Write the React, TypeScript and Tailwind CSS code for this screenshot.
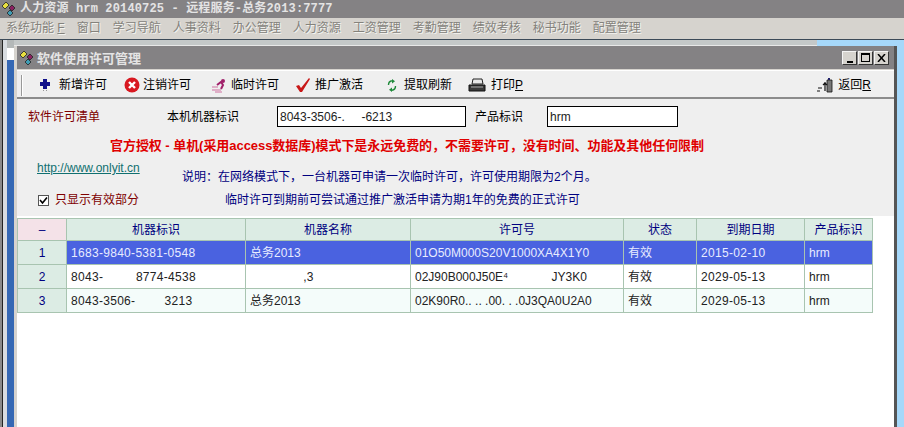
const cjk = "font-['Liberation_Sans','Noto_Sans_CJK_SC',sans-serif]";

const menus = ["窗口", "学习导航", "人事资料", "办公管理", "人力资源", "工资管理", "考勤管理", "绩效考核", "秘书功能", "配置管理"];

function Logo() {
  return (
    <svg width="18" height="16" viewBox="0 0 18 16" className="shrink-0">
      <path d="M1 5 L5 1 L8 4 L4 8 Z" fill="#e8e040" stroke="#222" strokeWidth="0.8" />
      <path d="M8 7 L11 4 L14 7 L11 10 Z" fill="#8a2060" stroke="#222" strokeWidth="0.8" />
      <path d="M6 12 L9 9 L12 12 L9 15 Z" fill="#3f9db5" stroke="#222" strokeWidth="0.8" />
    </svg>
  );
}

function PlusIcon() {
  return (
    <svg width="12" height="15" viewBox="0 0 12 15">
      <path d="M4 1h4v3h3v4H8v3H4V8H1V4h3z" fill="#10108a" />
      <path d="M4 12h1v1H4zM7 12h1v1H7z" fill="#999" />
    </svg>
  );
}

function CrossIcon() {
  return (
    <svg width="16" height="16" viewBox="0 0 16 16">
      <circle cx="8" cy="8" r="7.5" fill="#d81820" />
      <path d="M5 5l6 6M11 5l-6 6" stroke="#fff" strokeWidth="2.4" />
    </svg>
  );
}

function TempIcon() {
  return (
    <svg width="16" height="15" viewBox="0 0 16 15">
      <circle cx="12" cy="3" r="2" fill="#a0206a" />
      <path d="M6 7l4-3 2 3-2 4" stroke="#a0206a" strokeWidth="2" fill="none" />
      <path d="M1 9h6M1 12h9M4 14h7" stroke="#d070a0" strokeWidth="1.2" />
    </svg>
  );
}

function CheckIcon() {
  return (
    <svg width="16" height="15" viewBox="0 0 16 15">
      <path d="M1 8l3-1 2 3 8-10 1 1-8 13h-2z" fill="#c81818" />
    </svg>
  );
}

function RefreshIcon() {
  return (
    <svg width="10" height="13" viewBox="0 0 10 13">
      <path d="M5 0v2.5A3.5 3.5 0 0 0 2.2 6H.8A5 5 0 0 1 5 1z" fill="#1f8a3a" />
      <path d="M5 0l3 2.2L5 4.4z" fill="#1f8a3a" />
      <path d="M5 13v-2.5A3.5 3.5 0 0 0 7.8 7h1.4A5 5 0 0 1 5 12z" fill="#1f8a3a" />
      <path d="M5 13L2 10.8 5 8.6z" fill="#1f8a3a" />
    </svg>
  );
}

function PrintIcon() {
  return (
    <svg width="18" height="15" viewBox="0 0 18 15">
      <path d="M5 1h9l1 5H4z" fill="#e8e8e8" stroke="#222" />
      <path d="M1 7h16v6H1z" fill="#3a3a3a" stroke="#111" />
      <path d="M3 9h12" stroke="#aaa" />
    </svg>
  );
}

function ExitIcon() {
  return (
    <svg width="16" height="16" viewBox="0 0 16 16">
      <path d="M10 3h5v12h-5z" fill="#777" stroke="#111" strokeWidth="0.8" />
      <path d="M11 1h2v2h-2z" fill="#22226a" />
      <path d="M8 5v9M6 8l2-2 2 2M1 11h4M0 14h3" stroke="#111" strokeWidth="1.2" fill="none" />
    </svg>
  );
}

const tools = [
  { icon: <PlusIcon />, label: "新增许可", box: "ml-[16px] w-[85px]", gap: "gap-2" },
  { icon: <CrossIcon />, label: "注销许可", box: "w-[87px]", gap: "gap-[3px]" },
  { icon: <TempIcon />, label: "临时许可", box: "w-[84px]", gap: "gap-1" },
  { icon: <CheckIcon />, label: "推广激活", box: "w-[92px]", gap: "gap-1" },
  { icon: <RefreshIcon />, label: "提取刷新", box: "w-[81px]", gap: "gap-[7px]" },
];

const rows = [
  { no: "1", id: "1683-9840-5381-0548", name: "总务2013", lic: "01O50M000S20V1000XA4X1Y0", date: "2015-02-10" },
  { no: "2", id: "8043-         8774-4538", name: "                ,3", lic: "02J90B000J50E⁴             JY3K0", date: "2029-05-13" },
  { no: "3", id: "8043-3506-        3213", name: "总务2013", lic: "02K90R0.. .. .00. . .0J3QA0U2A0", date: "2029-05-13" },
];

const grid = "grid grid-cols-[49px_179px_165px_213px_73px_108px_67px]";
const heads = ["机器标识", "机器名称", "许可号", "状态", "到期日期", "产品标识"];
const winBtn = "w-[15px] h-[14px] bg-[#d6d3ce] border border-[#f4f4f4] border-r-[#333] border-b-[#333] flex justify-center";

export default function App() {
  return (
    <div className={`${cjk} w-[904px] h-[427px] overflow-hidden flex flex-col bg-white text-[12px] leading-none text-black`}>
      <div className="h-[18px] shrink-0 bg-[#848284] flex items-center pl-[1px] gap-[1px] font-['Liberation_Mono','Noto_Sans_CJK_SC',monospace] text-[12px] tracking-[0.15px] font-bold text-[#e4e4e4] whitespace-pre">
        <Logo />
        <span>人力资源 hrm 20140725 - 远程服务-总务2013:7777</span>
      </div>
      <div className="h-[21px] shrink-0 bg-[#d6d3ce] flex items-center pl-[6px] pb-[1px] gap-3 text-[#84827c] [text-shadow:1px_1px_0_#f4f4f0]">
        <span className="whitespace-pre">系统功能 <span className="underline">F</span></span>
        {menus.map((m) => (
          <span key={m}>{m}</span>
        ))}
      </div>
      <div className="h-[1px] shrink-0 bg-[#3c4a58]" />
      <div className="flex-1 flex min-h-0">
        <div className="w-[7px] shrink-0 flex">
          <div className="w-[2px] bg-[#8a8a8a]" />
          <div className="w-[1px] bg-[#222]" />
          <div className="w-[4px] bg-[#d8dce0]" />
        </div>
        <div className="w-[7px] shrink-0 flex flex-col">
          <div className="h-[8px] bg-[#b4b8b8]" />
          <div className="h-[12px] bg-white" />
          <div className="flex-1 bg-[#3568b4]" />
        </div>
        <div className="w-[883px] shrink-0 flex flex-col">
          <div className="h-[6px] shrink-0 flex">
            <div className="w-[803px] bg-[#c4c8c8] border-b border-[#e8e8e8]" />
            <div className="flex-1 bg-[#a6d8fa]" />
          </div>
          <div className="flex-1 min-h-0 flex flex-col bg-[#d6d3ce] pl-[3px] border-r-[3px] border-[#555]">
            <div className="h-[23px] shrink-0 bg-[#848284] flex items-center gap-[1px] pl-[2px] pr-[5px] text-[13px] font-bold text-[#e4e4e4]">
              <Logo />
              <span className="pt-[1px] -ml-[1px]">软件使用许可管理</span>
              <div className="ml-auto flex gap-[1px]">
                <button className={`${winBtn} items-end pb-[1px]`}>
                  <span className="w-[6px] h-[2px] bg-black" />
                </button>
                <button className={`${winBtn} items-center`}>
                  <span className="w-[9px] h-[9px] border border-black border-t-2" />
                </button>
                <button className={`${winBtn} items-center`}>
                  <svg width="9" height="8" viewBox="0 0 9 8">
                    <path d="M1 0l7 8M8 0L1 8" stroke="#000" strokeWidth="1.5" />
                  </svg>
                </button>
              </div>
            </div>
            <div className="h-[29px] shrink-0 mt-[1px] pt-[2px] bg-[#efefef] border-t border-b-2 border-t-[#fff] border-b-[#8c8c8c] flex items-center pl-[4px] pr-[23px]">
              <div className="w-[2px] h-[21px] bg-[#999] border-r border-white" />
              {tools.map((t) => (
                <div key={t.label} className={`flex items-center ${t.box} ${t.gap}`}>
                  {t.icon}
                  <span>{t.label}</span>
                </div>
              ))}
              <div className="flex items-center gap-[5px]">
                <PrintIcon />
                <span>打印<span className="underline">P</span></span>
              </div>
              <div className="ml-auto flex items-center gap-[5px]">
                <ExitIcon />
                <span>返回<span className="underline">R</span></span>
              </div>
            </div>
            <div className="flex-1 min-h-0 bg-white flex flex-col">
              <div className="h-[117px] shrink-0 bg-[#efefef] flex flex-col">
                <div className="flex items-center pt-[7px] pl-[11px]">
                  <span className="w-[139px] text-[#800000]">软件许可清单</span>
                  <span className="w-[110px]">本机机器标识</span>
                  <div className="w-[189px] h-[21px] bg-white border border-black flex items-center pl-[2px] text-[#222] whitespace-pre">8043-3506-.     -6213</div>
                  <span className="w-[72px] pl-[9px] box-content">产品标识</span>
                  <div className="w-[131px] h-[21px] bg-white border border-black flex items-center pl-[2px] text-[#222]">hrm</div>
                </div>
                <div className="pl-[93px] pt-[12px] text-[13px] leading-[14px] font-bold tracking-[-0.05px] text-[#e00000]">官方授权 - 单机(采用access数据库)模式下是永远免费的，不需要许可，没有时间、功能及其他任何限制</div>
                <div className="flex pl-[20px] pt-[9px]">
                  <a className="w-[145px] text-[#107070] underline">http://www.onlyit.cn</a>
                  <span className="pt-[9px] text-[#000080]">说明：在网络模式下，一台机器可申请一次临时许可，许可使用期限为2个月。</span>
                </div>
                <div className="flex items-center pl-[21px] pt-[11px]">
                  <span className="w-[11px] h-[11px] border border-[#555] bg-white flex items-center justify-center">
                    <svg width="9" height="9" viewBox="0 0 9 9">
                      <path d="M1 4l2.5 3L8 1.5" stroke="#000" strokeWidth="1.6" fill="none" />
                    </svg>
                  </span>
                  <span className="ml-[6px] w-[170px] text-[#800000]">只显示有效部分</span>
                  <span className="text-[#000080]">临时许可到期前可尝试通过推广激活申请为期1年的免费的正式许可</span>
                </div>
              </div>
              <div className="pt-[2px] w-[856px]">
                <div className={`${grid} h-[23px] border border-[#a8c4b0] text-[#000080]`}>
                  <div className="bg-[#f4e2e8] flex items-center justify-center border-r border-[#a8c4b0]">–</div>
                  {heads.map((h) => (
                    <div key={h} className="bg-[#dcece4] flex items-center justify-center border-r last:border-r-0 border-[#a8c4b0]">{h}</div>
                  ))}
                </div>
                {rows.map((r) => {
                  const on = r.no === "1";
                  const cell = `flex items-center pl-[4px] whitespace-pre border-r border-[#a8c4b0] ${on ? "bg-[#4a62e0] text-[#e8ecff]" : r.no === "3" ? "bg-[#f4fcfa] text-[#222]" : "bg-white text-[#222]"}`;
                  return (
                    <div key={r.no} className={`${grid} h-[24px] border-x border-b border-[#a8c4b0]`}>
                      <div className="bg-[#dcece4] text-[#000080] flex items-center justify-center border-r border-[#a8c4b0]">{r.no}</div>
                      <div className={`${cell} tracking-[0.3px]`}>{r.id}</div>
                      <div className={cell}>{r.name}</div>
                      <div className={cell}>{r.lic}</div>
                      <div className={cell}>有效</div>
                      <div className={`${cell} tracking-[0.3px]`}>{r.date}</div>
                      <div className={`${cell} border-r-0`}>hrm</div>
                    </div>
                  );
                })}
              </div>
            </div>
          </div>
        </div>
        <div className="flex-1 bg-[#a6d8fa]" />
      </div>
    </div>
  );
}
